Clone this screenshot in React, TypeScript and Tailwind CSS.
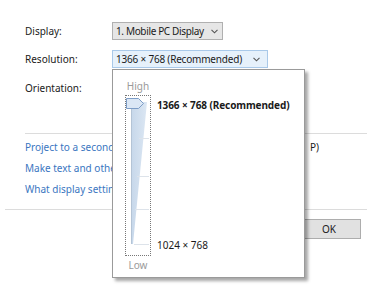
import React from "react";

function Chevron({ className = "" }: { className?: string }) {
  return (
    <svg width="7" height="5" viewBox="0 0 7 5" className={className}>
      <path d="M0.5 0.8 L3.5 3.8 L6.5 0.8" fill="none" stroke="#555" strokeWidth="1.1" />
    </svg>
  );
}

function Slider() {
  return (
    <div className="w-[26px] h-[161px] border border-dotted border-[#777]">
      <svg width="24" height="159" viewBox="0 0 24 159">
        <defs>
          <linearGradient id="wg" x1="0" x2="1" y1="0" y2="0">
            <stop offset="0" stopColor="#c6d7ea" />
            <stop offset="1" stopColor="#dce7f3" />
          </linearGradient>
        </defs>
        <polygon points="5,6 21,6 7,148 5,148" fill="url(#wg)" />
        <line x1="5.5" y1="6" x2="5.5" y2="148" stroke="#b4c4d6" strokeWidth="1" />
        <line x1="13" y1="42.5" x2="23" y2="42.5" stroke="#dde3ea" strokeWidth="1" />
        <line x1="11" y1="80.5" x2="23" y2="80.5" stroke="#dde3ea" strokeWidth="1" />
        <line x1="9" y1="113.5" x2="23" y2="113.5" stroke="#dde3ea" strokeWidth="1" />
        <line x1="8" y1="148.5" x2="23" y2="148.5" stroke="#dde3ea" strokeWidth="1" />
        <polygon points="0.5,2.5 12.5,2.5 17.5,7.5 12.5,12.5 0.5,12.5" fill="#dbe7f5" stroke="#7d9dc6" strokeWidth="1" />
      </svg>
    </div>
  );
}

export default function App() {
  return (
    <div className="relative w-[367px] h-[288px] bg-white overflow-hidden font-['Noto_Sans',sans-serif] text-[10px] text-[#1a1a1a] whitespace-nowrap">
      <div className="pl-[25px] pt-[22px] flex flex-col">
        <div className="flex items-center h-[18px]">
          <div className="w-[87px]">Display:</div>
          <div className="h-[18px] w-[111px] bg-[#e6e6e6] border border-[#b0b0b0] flex items-center pl-[3px] pr-[4px] justify-between">
            <span className="tracking-[-0.35px]">1. Mobile PC Display</span>
            <Chevron />
          </div>
        </div>
        <div className="flex items-center h-[18px] mt-[10px]">
          <div className="w-[87px]">Resolution:</div>
          <div className="h-[18px] w-[156px] bg-[#e6f1fb] border border-[#a9c9e9] flex items-center pl-[3px] pr-[7px] justify-between">
            <span className="tracking-[-0.2px]">1366 × 768 (Recommended)</span>
            <Chevron />
          </div>
        </div>
        <div className="flex items-center h-[18px] mt-[11px]">
          <div className="w-[87px]">Orientation:</div>
        </div>
      </div>

      <div className="mt-[36px] ml-[25px] h-px bg-[#dcdcdc]" />

      <div className="pl-[25px] pt-[3px] flex flex-col text-[#3a76bf]">
        <div className="h-[21px] flex items-center justify-between pr-[48px]">
          <span>Project to a second screen</span>
          <span className="text-[#1a1a1a]">P)</span>
        </div>
        <div className="h-[21px] flex items-center">Make text and other items larger or smaller</div>
        <div className="h-[21px] flex items-center">What display settings should I choose?</div>
      </div>

      <div className="mt-[9px] ml-[5px] h-px bg-[#dcdcdc]" />

      <div className="flex justify-end pr-[6px] mt-[9px]">
        <div className="w-[64px] h-[20px] bg-[#e1e1e1] border border-[#adadad] flex items-center justify-center">
          OK
        </div>
      </div>

      <div className="absolute left-[112px] top-[69px] w-[193px] h-[209px] bg-white border border-[#9a9a9a] shadow-[3px_3px_3px_rgba(0,0,0,0.35)] flex">
        <div className="flex flex-col items-center pl-[10px] pt-[9px] w-[40px]">
          <div className="text-[#9a9a9a] leading-[14px] h-[16px]">High</div>
          <Slider />
          <div className="text-[#9a9a9a] leading-[14px] mt-[2px]">Low</div>
        </div>
        <div className="flex flex-col pl-[4px] pt-[28px]">
          <div className="font-bold leading-[14px] tracking-[-0.1px]">1366 × 768 (Recommended)</div>
          <div className="leading-[14px] mt-[126px]">1024 × 768</div>
        </div>
      </div>
    </div>
  );
}
